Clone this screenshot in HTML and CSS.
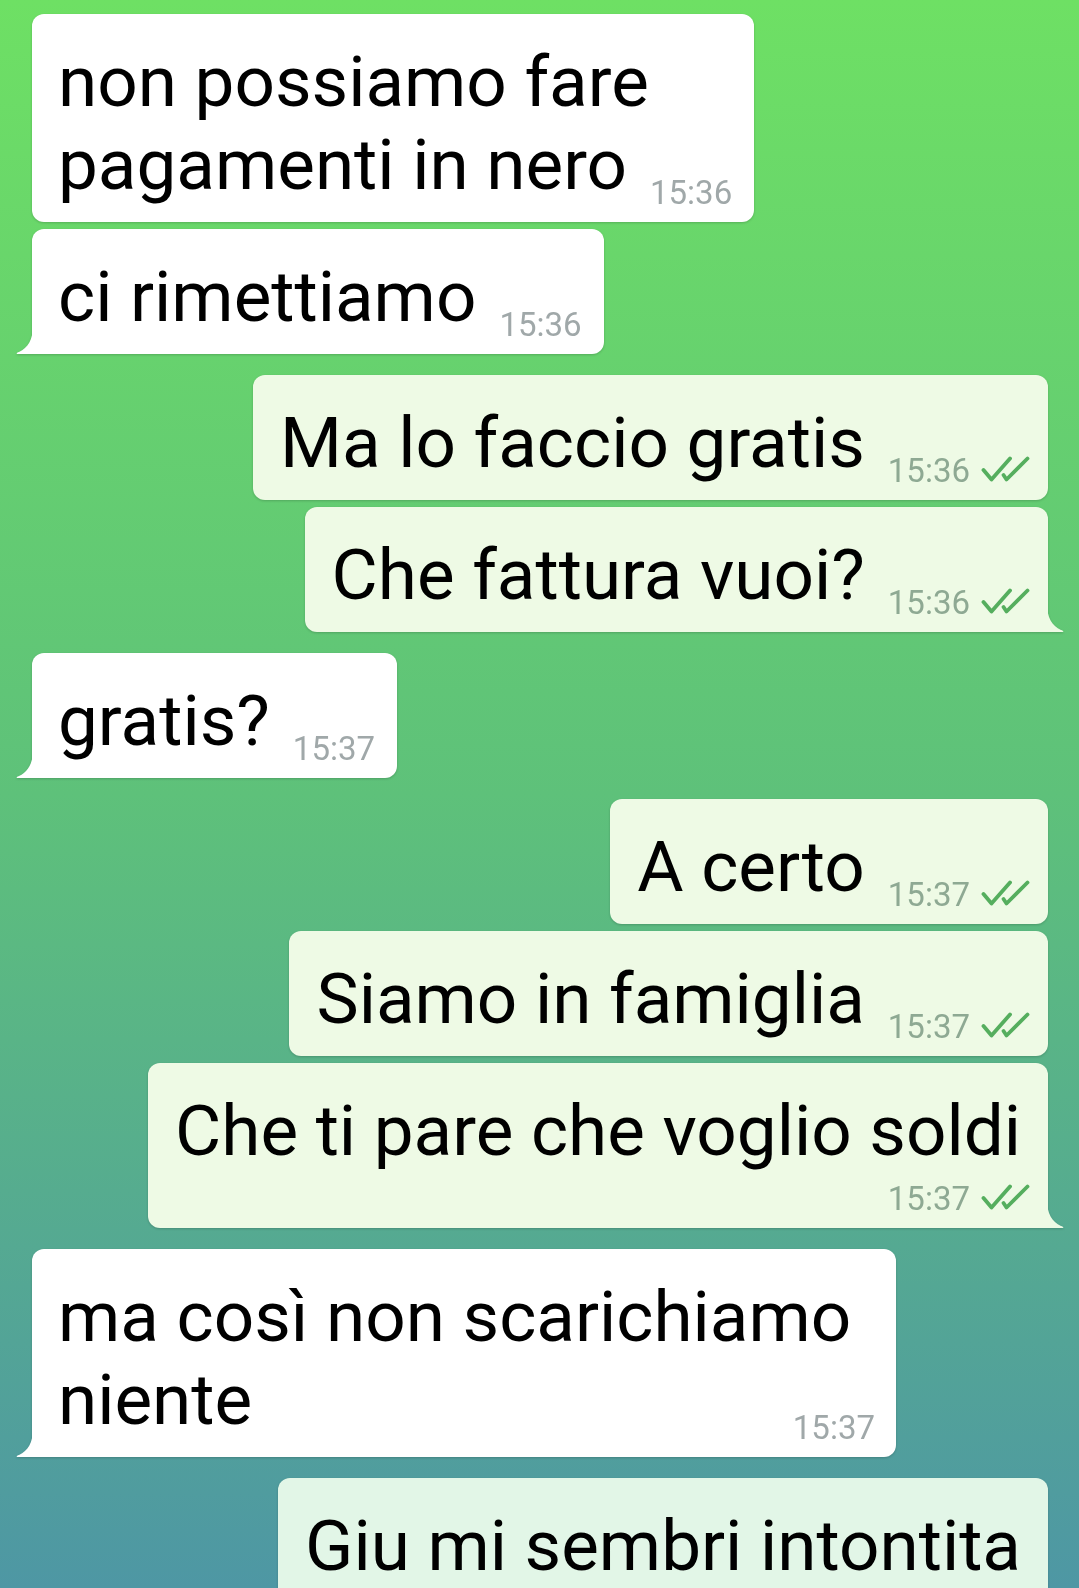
FILE: index.html
```html
<!DOCTYPE html>
<html lang="it">

<head>
    <meta charset="UTF-8">
    <meta name="viewport" content="width=device-width, initial-scale=1.0">
    <title>Chat</title>
    <link rel="stylesheet" href="styles.css">
</head>

<body>
    <div class="chat">
        <div class="bubble in">non possiamo fare<br>pagamenti in nero<span class="meta"><span class="time">15:36</span></span></div>
        <div class="bubble in tailed">ci rimettiamo<span class="meta"><span class="time">15:36</span></span>
            <svg class="tail" viewBox="0 0 17 28"><path d="M17 0 C17 13 12 22 3 26 C0 27 0 28 2 28 L17 28 Z"/></svg>
        </div>

        <div class="bubble out first">Ma lo faccio gratis<span class="meta"><span class="time">15:36</span><svg class="ticks" viewBox="0 0 49 26"><path d="M2.5 14 L10.5 23.5 L29 2.5"/><path d="M22.5 19 L25.5 23.5 L46.5 2.5"/></svg></span></div>
        <div class="bubble out tailed">Che fattura vuoi?<span class="meta"><span class="time">15:36</span><svg class="ticks" viewBox="0 0 49 26"><path d="M2.5 14 L10.5 23.5 L29 2.5"/><path d="M22.5 19 L25.5 23.5 L46.5 2.5"/></svg></span>
            <svg class="tail" viewBox="0 0 17 28"><path d="M17 0 C17 13 12 22 3 26 C0 27 0 28 2 28 L17 28 Z"/></svg>
        </div>

        <div class="bubble in tailed first">gratis?<span class="meta"><span class="time">15:37</span></span>
            <svg class="tail" viewBox="0 0 17 28"><path d="M17 0 C17 13 12 22 3 26 C0 27 0 28 2 28 L17 28 Z"/></svg>
        </div>

        <div class="bubble out first">A certo<span class="meta"><span class="time">15:37</span><svg class="ticks" viewBox="0 0 49 26"><path d="M2.5 14 L10.5 23.5 L29 2.5"/><path d="M22.5 19 L25.5 23.5 L46.5 2.5"/></svg></span></div>
        <div class="bubble out">Siamo in famiglia<span class="meta"><span class="time">15:37</span><svg class="ticks" viewBox="0 0 49 26"><path d="M2.5 14 L10.5 23.5 L29 2.5"/><path d="M22.5 19 L25.5 23.5 L46.5 2.5"/></svg></span></div>
        <div class="bubble out tailed stack">Che ti pare che voglio soldi<span class="meta"><span class="time">15:37</span><svg class="ticks" viewBox="0 0 49 26"><path d="M2.5 14 L10.5 23.5 L29 2.5"/><path d="M22.5 19 L25.5 23.5 L46.5 2.5"/></svg></span>
            <svg class="tail" viewBox="0 0 17 28"><path d="M17 0 C17 13 12 22 3 26 C0 27 0 28 2 28 L17 28 Z"/></svg>
        </div>

        <div class="bubble in tailed stack wide first">ma così non scarichiamo niente<span class="meta overlap"><span class="time">15:37</span></span>
            <svg class="tail" viewBox="0 0 17 28"><path d="M17 0 C17 13 12 22 3 26 C0 27 0 28 2 28 L17 28 Z"/></svg>
        </div>

        <div class="bubble out first last stack">Giu mi sembri intontita<span class="meta"><span class="time">15:37</span><svg class="ticks" viewBox="0 0 49 26"><path d="M2.5 14 L10.5 23.5 L29 2.5"/><path d="M22.5 19 L25.5 23.5 L46.5 2.5"/></svg></span></div>
    </div>
</body>

</html>
```

FILE: styles.css
```css
* {
    margin: 0;
    padding: 0;
    box-sizing: border-box;
}

body {
    font-family: Roboto, "Noto Sans", sans-serif;
}

.chat {
    display: flex;
    flex-direction: column;
    gap: 7px;
    height: 100vh;
    overflow: hidden;
    padding: 14px 31px 0 32px;
    background: linear-gradient(180deg, #6ee064 0%, #5ec17a 50%, #4e97a4 100%);
}

.bubble {
    position: relative;
    flex-shrink: 0;
    padding: 26px 22px 13px 26px;
    border-radius: 12px;
    font-size: 71px;
    line-height: 83px;
    color: #000;
    filter: drop-shadow(0 1.5px 0.8px rgba(0, 0, 0, 0.18));
}

.bubble.first {
    margin-top: 14px;
}

.bubble.in {
    align-self: flex-start;
    background: #fff;
}

.bubble.out {
    align-self: flex-end;
    padding-left: 27px;
    padding-right: 18px;
    background: #eefae5;
}

.bubble.out.stack {
    padding-right: 27px;
}

.bubble.last {
    background: #e2f6e7;
}

.bubble.wide {
    width: 864px;
    padding-right: 21px;
}

.meta {
    display: inline-block;
    margin-left: 23px;
    font-size: 33px;
    line-height: 33px;
    vertical-align: -15px;
    white-space: nowrap;
}

.bubble.stack .meta {
    display: block;
    width: fit-content;
    margin-left: auto;
    margin-top: 10px;
}

.bubble.out.stack .meta {
    margin-right: -9px;
}

.bubble.stack .meta.overlap {
    margin-top: -30px;
}

.in .time {
    color: #a0a8a9;
}

.out .time {
    color: #8ea993;
}

.ticks {
    width: 49px;
    height: 26px;
    margin-left: 11px;
    fill: none;
    stroke: #55ae5e;
    stroke-width: 3.8;
    stroke-linecap: round;
    stroke-linejoin: round;
}

.tail {
    position: absolute;
    bottom: 0;
    width: 17px;
    height: 28px;
}

.in.tailed {
    border-bottom-left-radius: 0;
}

.in .tail {
    left: -16px;
    fill: #fff;
}

.out.tailed {
    border-bottom-right-radius: 0;
}

.out .tail {
    right: -16px;
    fill: #eefae5;
    transform: scaleX(-1);
}
```
